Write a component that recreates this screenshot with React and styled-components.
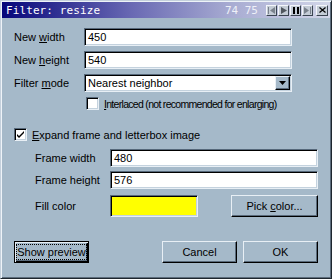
import React from 'react';
import styled, { createGlobalStyle } from 'styled-components';

const Global = createGlobalStyle`
  html, body {
    margin: 0;
    padding: 0;
    background: #a5b9c9;
  }
  * { box-sizing: border-box; }
`;

const Window = styled.div`
  width: 332px;
  height: 279px;
  background: #a5b9c9;
  border: 1px solid;
  border-color: #c4d0dc #1e262e #1e262e #c4d0dc;
  box-shadow: inset 1px 1px #eef3f8, inset -1px -1px #5c6c7c;
  padding: 1px;
  display: flex;
  flex-direction: column;
  font-family: "Liberation Sans", Arial, sans-serif;
  font-size: 11px;
  color: #000;
`;

const TitleBar = styled.div`
  height: 16px;
  display: flex;
  align-items: center;
  padding: 0 2px 0 4px;
  background: linear-gradient(to right, #06067a 0%, #6a6ab4 40%, #a8acd2 70%, #d2d6e8 100%);
  font-family: "DejaVu Sans Mono", "Liberation Mono", monospace;
  font-size: 11px;
`;

const Title = styled.span`
  color: #fff;
  flex: 1;
  letter-spacing: 0.1px;
`;

const Frames = styled.span`
  color: #eef0f8;
  margin-right: 7px;
`;

const TinyBtn = styled.div`
  width: ${p => p.$w || 11}px;
  height: 11px;
  margin-left: ${p => p.$gap || 1}px;
  background: #c4ccd6;
  border: 1px solid;
  border-color: #f4f6fa #3a4450 #3a4450 #f4f6fa;
  display: flex;
  align-items: center;
  justify-content: center;
`;

const Body = styled.div`
  flex: 1;
  display: flex;
  flex-direction: column;
  padding: 10px 12px 0 12px;
`;

const Row = styled.div`
  display: flex;
  align-items: center;
  height: ${p => p.$h || 18}px;
  margin-top: ${p => p.$mt || 0}px;
  padding-left: ${p => p.$indent || 0}px;
`;

const Label = styled.div`
  width: ${p => p.$w}px;
  flex-shrink: 0;
  u { text-decoration: underline; }
`;

const Caption = styled.span`
  white-space: nowrap;
  font-size: ${p => (p.$tight ? '10.5px' : '11px')};
  letter-spacing: ${p => (p.$tight ? '-0.7px' : '0')};
  u { text-decoration: underline; }
`;

const Field = styled.div`
  width: 208px;
  height: 18px;
  background: ${p => p.$fill || '#fff'};
  border: 1px solid;
  border-color: #56687a #e8eff5 #e8eff5 #56687a;
  box-shadow: inset 1px 1px #000, inset -1px -1px #c4d2de;
  padding: 0 2px 0 3px;
  display: flex;
  align-items: center;
  position: relative;
`;

const Swatch = styled(Field)`
  width: 88px;
  height: 22px;
`;

const DropBtn = styled.div`
  position: absolute;
  right: 1px;
  top: 1px;
  width: 15px;
  height: 14px;
  background: #a5b9c9;
  border: 1px solid;
  border-color: #e8eff5 #000 #000 #e8eff5;
  box-shadow: inset -1px -1px #5a6b7c;
  display: flex;
  align-items: center;
  justify-content: center;
`;

const Check = styled.div`
  width: 13px;
  height: 13px;
  flex-shrink: 0;
  background: #fff;
  border: 1px solid;
  border-color: #56687a #e8eff5 #e8eff5 #56687a;
  box-shadow: inset 1px 1px #000, inset -1px -1px #c4d2de;
  margin-left: ${p => p.$ml || 0}px;
  margin-right: 5px;
  display: flex;
  align-items: center;
  justify-content: center;
`;

const Button = styled.div`
  width: ${p => p.$w || 75}px;
  height: 22px;
  margin-left: ${p => p.$ml || 0}px;
  background: #a5b9c9;
  border: 1px solid;
  border-color: #e8eff5 #000 #000 #e8eff5;
  box-shadow: inset -1px -1px #5a6b7c;
  display: flex;
  align-items: center;
  justify-content: center;
`;

const DefaultButton = styled(Button)`
  border: 1px solid #000;
  box-shadow: inset 1px 1px #e8eff5, inset -1px -1px #000, inset -2px -2px #5a6b7c;
`;

const Focus = styled.span`
  border: 1px dotted #000;
  padding: 1px 0;
  line-height: 12px;
`;

const Spacer = styled.div`
  flex: 1;
`;

const Arrow = () => (
  <svg width="7" height="4" viewBox="0 0 7 4">
    <path d="M0 0h7L3.5 4z" fill="#000" />
  </svg>
);

const Tick = () => (
  <svg width="9" height="9" viewBox="0 0 9 9">
    <path d="M1 4l2 2 5-5v2L3 8 1 6z" fill="#000" />
  </svg>
);

function App() {
  return (
    <>
      <Global />
      <Window>
        <TitleBar>
          <Title>Filter: resize</Title>
          <Frames>74 75</Frames>
          <TinyBtn>
            <svg width="7" height="7" viewBox="0 0 7 7"><path d="M0 0h1v7H0zM7 0v7L2 3.5z" fill="#7a828c" /></svg>
          </TinyBtn>
          <TinyBtn>
            <svg width="6" height="7" viewBox="0 0 6 7"><path d="M0 0l6 3.5L0 7z" fill="#50565e" /></svg>
          </TinyBtn>
          <TinyBtn>
            <svg width="6" height="7" viewBox="0 0 6 7"><path d="M0 0h2v7H0zM4 0h2v7H4z" fill="#000" /></svg>
          </TinyBtn>
          <TinyBtn>
            <svg width="7" height="7" viewBox="0 0 7 7"><path d="M6 0h1v7H6zM0 0v7l5-3.5z" fill="#7a828c" /></svg>
          </TinyBtn>
          <TinyBtn $w={12} $gap={3}>
            <svg width="7" height="6" viewBox="0 0 7 6"><path d="M0.5 0.5l6 5M6.5 0.5l-6 5" stroke="#000" strokeWidth="1.2" /></svg>
          </TinyBtn>
        </TitleBar>
        <Body>
          <Row>
            <Label $w={70}>New <u>w</u>idth</Label>
            <Field>450</Field>
          </Row>
          <Row $mt={5}>
            <Label $w={70}>New <u>h</u>eight</Label>
            <Field>540</Field>
          </Row>
          <Row $mt={5}>
            <Label $w={70}>Filter <u>m</u>ode</Label>
            <Field>
              Nearest neighbor
              <DropBtn><Arrow /></DropBtn>
            </Field>
          </Row>
          <Row $mt={5} $h={13}>
            <Check $ml={72} />
            <Caption $tight><u>I</u>nterlaced (not recommended for enlarging)</Caption>
          </Row>
          <Row $mt={18} $h={13}>
            <Check><Tick /></Check>
            <Caption><u>E</u>xpand frame and letterbox image</Caption>
          </Row>
          <Row $mt={8} $indent={21}>
            <Label $w={75}>Frame width</Label>
            <Field>480</Field>
          </Row>
          <Row $mt={4} $indent={21}>
            <Label $w={75}>Frame height</Label>
            <Field>576</Field>
          </Row>
          <Row $mt={6} $h={22} $indent={21}>
            <Label $w={75}>Fill color</Label>
            <Swatch $fill="#ffff00" />
            <Spacer />
            <Button $w={87}>
              <Caption>Pick <u>c</u>olor...</Caption>
            </Button>
          </Row>
          <Row $mt={24} $h={22}>
            <DefaultButton>
              <Focus>Show preview</Focus>
            </DefaultButton>
            <Spacer />
            <Button>Cancel</Button>
            <Button $ml={6}>OK</Button>
          </Row>
        </Body>
      </Window>
    </>
  );
}

export default App;
